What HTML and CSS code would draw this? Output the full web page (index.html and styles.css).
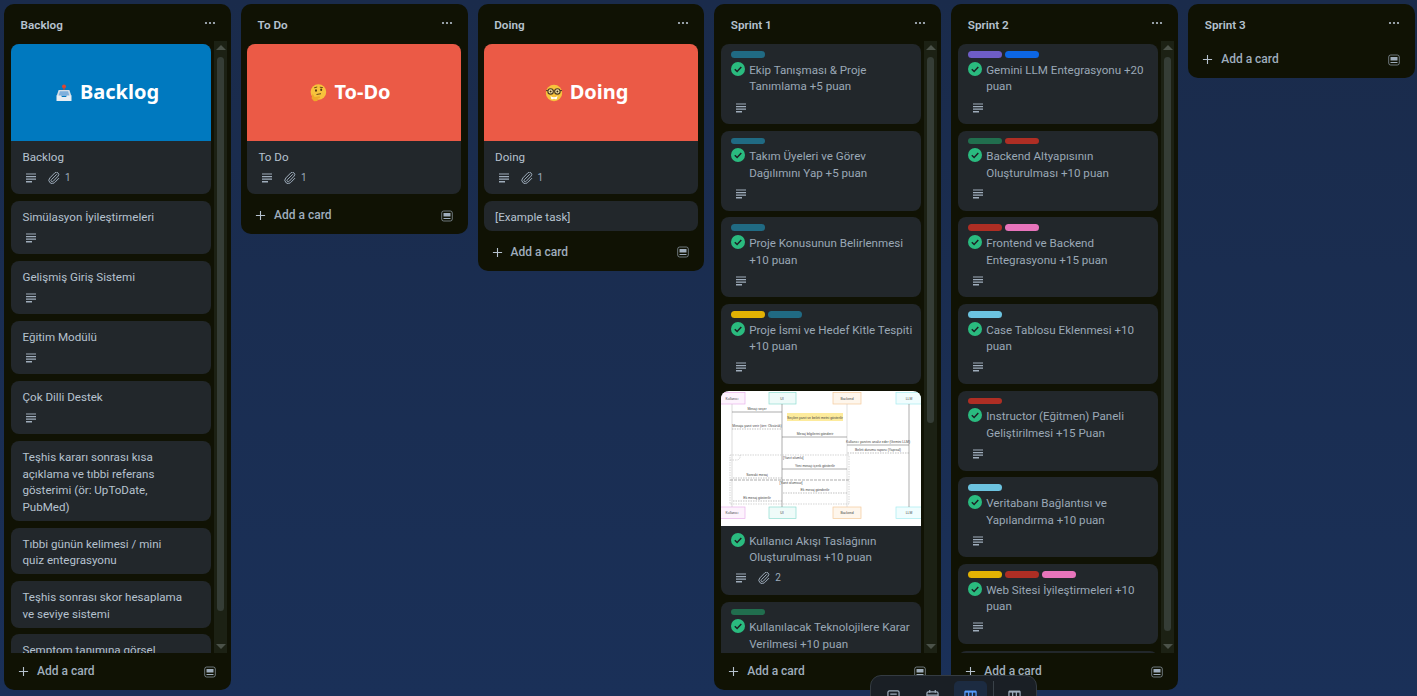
FILE: index.html
```html
<!DOCTYPE html>
<html lang="tr">
<head>
    <meta charset="UTF-8">
    <meta name="viewport" content="width=device-width, initial-scale=1.0">
    <title>Board</title>
    <link rel="stylesheet" href="styles.css">
</head>
<body>

    <svg class="sprites" aria-hidden="true">
        <symbol id="i-desc" viewBox="0 0 12 12">
            <path d="M1 2h10M1 4.6h10M1 7.2h10" stroke="currentColor" stroke-width="1.2" fill="none"/>
            <path d="M1 9.800h6" stroke="currentColor" stroke-width="1.4" fill="none"/>
        </symbol>
        <symbol id="i-clip" viewBox="0 0 12 12">
            <path d="M8.900 2.200 3.400 7.700a1.200 1.200 0 0 0 1.700 1.700l5-5.300a2.300 2.300 0 0 0-3.300-3.200L1.900 5.900a3.300 3.300 0 0 0 4.700 4.700l4.400-4.500" stroke="currentColor" stroke-width="1" fill="none"/>
        </symbol>
        <symbol id="i-check" viewBox="0 0 14 14">
            <circle cx="7" cy="7" r="7" fill="#2abb7f"/>
            <path d="M3.800 7.200l2.300 2.300L10.300 4.900" stroke="#1d2125" stroke-width="1.500" fill="none"/>
        </symbol>
        <symbol id="i-dots" viewBox="0 0 12 4">
            <circle cx="2" cy="2" r="1.100" fill="currentColor"/>
            <circle cx="6" cy="2" r="1.100" fill="currentColor"/>
            <circle cx="10" cy="2" r="1.100" fill="currentColor"/>
        </symbol>
        <symbol id="i-plus" viewBox="0 0 12 12">
            <path d="M6 1v10M1 6h10" stroke="currentColor" stroke-width="1.200" fill="none"/>
        </symbol>
        <symbol id="i-template" viewBox="0 0 12 12">
            <rect x=".7" y="1" width="10.600" height="10" rx="2" stroke="currentColor" stroke-width="1" stroke-opacity=".65" fill="none"/>
            <rect x="2.500" y="3" width="7" height="3.500" fill="currentColor"/>
            <path d="M2.500 8.500h7" stroke="currentColor" stroke-width="1" fill="none"/>
        </symbol>
        <symbol id="e-inbox" viewBox="0 0 18 18">
            <circle cx="9" cy="2.600" r="2" fill="#e0452f"/>
            <rect x="8.400" y="3" width="1.200" height="4" fill="#c9453a"/>
            <path d="M3.600 6h10.800l2 6H1.600z" fill="#d3dde6"/>
            <path d="M5 7.200h8l1.500 4.800h-11z" fill="#7fb0dc"/>
            <path d="M1.500 11.500h4.500l1 1.500h4l1-1.500h4.500V17h-15z" fill="#e8eef3"/>
        </symbol>
        <symbol id="e-think" viewBox="0 0 18 18">
            <circle cx="9.400" cy="8" r="7.800" fill="#f7c33c"/>
            <ellipse cx="7" cy="6.500" rx="1" ry="1.300" fill="#5b3a14"/>
            <ellipse cx="12.200" cy="5.800" rx="1" ry="1.300" fill="#5b3a14"/>
            <path d="M5.200 3.800l3-.8M10.800 3.200l3 .4M7.500 10.500l4.500-.8" stroke="#5b3a14" stroke-width=".9" fill="none"/>
            <path d="M3.600 9.500l2 3.500 5-.8.600 1.500-2.500 1-.2 2.300-3.500.3-2.500-3z" fill="#eea92a"/>
        </symbol>
        <symbol id="e-nerd" viewBox="0 0 18 18">
            <circle cx="9" cy="9" r="8.200" fill="#f7c33c"/>
            <circle cx="5.600" cy="7.400" r="2.700" fill="#fbe7a5" stroke="#4a3a20" stroke-width="1.100"/>
            <circle cx="12.400" cy="7.400" r="2.700" fill="#fbe7a5" stroke="#4a3a20" stroke-width="1.100"/>
            <circle cx="5.600" cy="7.600" r="1" fill="#3a2a14"/>
            <circle cx="12.400" cy="7.600" r="1" fill="#3a2a14"/>
            <path d="M1 6.600h2M8.200 6.800h1.600M15 6.600h2" stroke="#4a3a20" stroke-width="1" fill="none"/>
            <path d="M5.500 12c2 1.600 5 1.600 7 0l-.8 3.200H9.800L9 14.400l-.8.800H6.300z" fill="#fff"/>
        </symbol>
        <symbol id="t-inbox" viewBox="0 0 14 14">
            <rect x="1" y="1" width="12" height="11.500" rx="1.500" stroke="currentColor" stroke-width="1.300" fill="none"/>
            <path d="M3.500 4.500h7M3.500 8h7" stroke="currentColor" stroke-width="1.300" fill="none"/>
        </symbol>
        <symbol id="t-cal" viewBox="0 0 14 14">
            <rect x="1" y="2" width="12" height="10.500" rx="1.500" stroke="currentColor" stroke-width="1.300" fill="none"/>
            <path d="M4 0v3M10 0v3M1 5.500h12" stroke="currentColor" stroke-width="1.300" fill="none"/>
        </symbol>
        <symbol id="t-board" viewBox="0 0 14 14">
            <path d="M1 2h12v10.500H1zM5 2v10.500M9 2v10.500" stroke="currentColor" stroke-width="1.300" fill="none"/>
            <path d="M1 1.500h12" stroke="currentColor" stroke-width="1.800" fill="none"/>
        </symbol>
    </svg>

    <div class="board">

        <section class="list">
            <header class="list-head"><h2>Backlog</h2><svg class="dots"><use href="#i-dots"/></svg></header>
            <div class="list-body">
                <div class="cards">
                    <article class="card">
                        <div class="cover cover-blue"><svg class="emoji"><use href="#e-inbox"/></svg><span>Backlog</span></div>
                        <p class="title">Backlog</p>
                        <div class="badges"><svg class="ic"><use href="#i-desc"/></svg><svg class="ic clip"><use href="#i-clip"/></svg><span>1</span></div>
                    </article>
                    <article class="card"><p class="title">Simülasyon İyileştirmeleri</p><div class="badges"><svg class="ic"><use href="#i-desc"/></svg></div></article>
                    <article class="card"><p class="title">Gelişmiş Giriş Sistemi</p><div class="badges"><svg class="ic"><use href="#i-desc"/></svg></div></article>
                    <article class="card"><p class="title">Eğitim Modülü</p><div class="badges"><svg class="ic"><use href="#i-desc"/></svg></div></article>
                    <article class="card"><p class="title">Çok Dilli Destek</p><div class="badges"><svg class="ic"><use href="#i-desc"/></svg></div></article>
                    <article class="card card-plain"><p class="title">Teşhis kararı sonrası kısa açıklama ve tıbbi referans gösterimi (ör: UpToDate, PubMed)</p></article>
                    <article class="card card-plain"><p class="title">Tıbbi günün kelimesi / mini quiz entegrasyonu</p></article>
                    <article class="card card-plain"><p class="title">Teşhis sonrası skor hesaplama ve seviye sistemi</p></article>
                    <article class="card card-plain"><p class="title">Semptom tanımına görsel</p></article>
                </div>
                <div class="scrollbar">
                    <i class="arrow-up"></i>
                    <div class="track"><div class="thumb thumb-backlog"></div></div>
                    <i class="arrow-down"></i>
                </div>
            </div>
            <footer class="list-foot"><svg class="plus"><use href="#i-plus"/></svg><span>Add a card</span><svg class="tpl"><use href="#i-template"/></svg></footer>
        </section>

        <section class="list">
            <header class="list-head"><h2>To Do</h2><svg class="dots"><use href="#i-dots"/></svg></header>
            <div class="list-body">
                <div class="cards cards-wide">
                    <article class="card">
                        <div class="cover cover-red"><svg class="emoji"><use href="#e-think"/></svg><span>To-Do</span></div>
                        <p class="title">To Do</p>
                        <div class="badges"><svg class="ic"><use href="#i-desc"/></svg><svg class="ic clip"><use href="#i-clip"/></svg><span>1</span></div>
                    </article>
                </div>
            </div>
            <footer class="list-foot"><svg class="plus"><use href="#i-plus"/></svg><span>Add a card</span><svg class="tpl"><use href="#i-template"/></svg></footer>
        </section>

        <section class="list">
            <header class="list-head"><h2>Doing</h2><svg class="dots"><use href="#i-dots"/></svg></header>
            <div class="list-body">
                <div class="cards cards-wide">
                    <article class="card">
                        <div class="cover cover-red"><svg class="emoji"><use href="#e-nerd"/></svg><span>Doing</span></div>
                        <p class="title">Doing</p>
                        <div class="badges"><svg class="ic"><use href="#i-desc"/></svg><svg class="ic clip"><use href="#i-clip"/></svg><span>1</span></div>
                    </article>
                    <article class="card card-plain"><p class="title">[Example task]</p></article>
                </div>
            </div>
            <footer class="list-foot"><svg class="plus"><use href="#i-plus"/></svg><span>Add a card</span><svg class="tpl"><use href="#i-template"/></svg></footer>
        </section>

        <section class="list">
            <header class="list-head"><h2>Sprint 1</h2><svg class="dots"><use href="#i-dots"/></svg></header>
            <div class="list-body">
                <div class="cards">
                    <article class="card done">
                        <div class="labels"><b class="teal"></b></div>
                        <p class="title"><svg class="check"><use href="#i-check"/></svg>Ekip Tanışması &amp; Proje Tanımlama +5 puan</p>
                        <div class="badges"><svg class="ic"><use href="#i-desc"/></svg></div>
                    </article>
                    <article class="card done">
                        <div class="labels"><b class="teal"></b></div>
                        <p class="title"><svg class="check"><use href="#i-check"/></svg>Takım Üyeleri ve Görev Dağılımını Yap +5 puan</p>
                        <div class="badges"><svg class="ic"><use href="#i-desc"/></svg></div>
                    </article>
                    <article class="card done">
                        <div class="labels"><b class="teal"></b></div>
                        <p class="title"><svg class="check"><use href="#i-check"/></svg>Proje Konusunun Belirlenmesi +10 puan</p>
                        <div class="badges"><svg class="ic"><use href="#i-desc"/></svg></div>
                    </article>
                    <article class="card done">
                        <div class="labels"><b class="yellow"></b><b class="teal"></b></div>
                        <p class="title"><svg class="check"><use href="#i-check"/></svg>Proje İsmi ve Hedef Kitle Tespiti +10 puan</p>
                        <div class="badges"><svg class="ic"><use href="#i-desc"/></svg></div>
                    </article>
                    <article class="card done card-img">
                        <svg class="diagram" viewBox="0 0 200 135">
                            <rect width="200" height="135" fill="#fff"/>
                            <g fill="none" stroke-width=".7">
                                <rect x="-2" y="1.500" width="26" height="11.500" stroke="#e7b3ea" fill="#fdf3fd"/>
                                <rect x="48" y="1.500" width="27" height="11.500" stroke="#8fdcd0" fill="#effbf9"/>
                                <rect x="112" y="1.500" width="28" height="11.500" stroke="#f3c99b" fill="#fef6ec"/>
                                <rect x="175" y="1.500" width="27" height="11.500" stroke="#a5ecf0" fill="#f0fdfe"/>
                                <rect x="-2" y="116" width="26" height="11.500" stroke="#e7b3ea" fill="#fdf3fd"/>
                                <rect x="48" y="116" width="27" height="11.500" stroke="#8fdcd0" fill="#effbf9"/>
                                <rect x="112" y="116" width="28" height="11.500" stroke="#f3c99b" fill="#fef6ec"/>
                                <rect x="175" y="116" width="27" height="11.500" stroke="#a5ecf0" fill="#f0fdfe"/>
                            </g>
                            <rect x="66" y="22" width="56" height="8" fill="#fdeb9c"/>
                            <g stroke-width=".6" fill="none">
                                <path d="M11 13v103" stroke="#c4c4c4"/>
                                <path d="M61 13v103" stroke="#777"/>
                                <path d="M126 13v103" stroke="#ccc"/>
                                <path d="M188 13v103" stroke="#777"/>
                                <path d="M11 21h50M61 46h65M126 54h62M126 78H61" stroke="#777"/>
                                <path d="M11 38h50M188 62h-62M61 87H11M126 102H61M61 110H11" stroke="#999" stroke-dasharray="1.500 1"/>
                                <path d="M9 89h119" stroke="#777" stroke-dasharray="3 1"/>
                                <path d="M9 64h119v49H9zM9 69h8l2-2v-3" stroke="#bbb" stroke-dasharray="1.500 1"/>
                            </g>
                            <g class="diagram-text">
                                <text x="11" y="8.500" text-anchor="middle">Kullanıcı</text>
                                <text x="61" y="8.500" text-anchor="middle">UI</text>
                                <text x="126" y="8.500" text-anchor="middle">Backend</text>
                                <text x="188" y="8.500" text-anchor="middle">LLM</text>
                                <text x="11" y="123" text-anchor="middle">Kullanıcı</text>
                                <text x="61" y="123" text-anchor="middle">UI</text>
                                <text x="126" y="123" text-anchor="middle">Backend</text>
                                <text x="188" y="123" text-anchor="middle">LLM</text>
                                <text x="36" y="19" text-anchor="middle">Mesajı seçer</text>
                                <text x="94" y="27.500" text-anchor="middle">Seçilen yanıt ve belirti metni gösterilir</text>
                                <text x="36" y="36" text-anchor="middle">Mesaja yanıt verir (örn: Öksürük)</text>
                                <text x="94" y="44" text-anchor="middle">Mesaj bilgilerini gönderir</text>
                                <text x="157" y="52" text-anchor="middle">Kullanıcı yanıtını analiz eder (Gemini LLM)</text>
                                <text x="157" y="60" text-anchor="middle">Belirti durumu raporu (Yapısal)</text>
                                <text x="62" y="68">[Yanıt olumlu]</text>
                                <text x="94" y="76" text-anchor="middle">Yeni mesajı içerik gösterilir</text>
                                <text x="36" y="85" text-anchor="middle">Sonraki mesaj</text>
                                <text x="70" y="93" text-anchor="middle">[Yanıt olumsuz]</text>
                                <text x="94" y="100" text-anchor="middle">Ek mesaj gönderilir</text>
                                <text x="36" y="108" text-anchor="middle">Ek mesaj gösterilir</text>
                            </g>
                        </svg>
                        <div class="labels labels-none"></div>
                        <p class="title"><svg class="check"><use href="#i-check"/></svg>Kullanıcı Akışı Taslağının Oluşturulması +10 puan</p>
                        <div class="badges"><svg class="ic"><use href="#i-desc"/></svg><svg class="ic clip"><use href="#i-clip"/></svg><span>2</span></div>
                    </article>
                    <article class="card done">
                        <div class="labels"><b class="green"></b></div>
                        <p class="title"><svg class="check"><use href="#i-check"/></svg>Kullanılacak Teknolojilere Karar Verilmesi +10 puan</p>
                    </article>
                </div>
                <div class="scrollbar">
                    <i class="arrow-up"></i>
                    <div class="track"><div class="thumb thumb-s1"></div></div>
                    <i class="arrow-down"></i>
                </div>
            </div>
            <footer class="list-foot"><svg class="plus"><use href="#i-plus"/></svg><span>Add a card</span><svg class="tpl"><use href="#i-template"/></svg></footer>
        </section>

        <section class="list">
            <header class="list-head"><h2>Sprint 2</h2><svg class="dots"><use href="#i-dots"/></svg></header>
            <div class="list-body">
                <div class="cards">
                    <article class="card done">
                        <div class="labels"><b class="purple"></b><b class="blue"></b></div>
                        <p class="title"><svg class="check"><use href="#i-check"/></svg>Gemini LLM Entegrasyonu +20 puan</p>
                        <div class="badges"><svg class="ic"><use href="#i-desc"/></svg></div>
                    </article>
                    <article class="card done">
                        <div class="labels"><b class="green"></b><b class="red"></b></div>
                        <p class="title"><svg class="check"><use href="#i-check"/></svg>Backend Altyapısının Oluşturulması +10 puan</p>
                        <div class="badges"><svg class="ic"><use href="#i-desc"/></svg></div>
                    </article>
                    <article class="card done">
                        <div class="labels"><b class="red"></b><b class="pink"></b></div>
                        <p class="title"><svg class="check"><use href="#i-check"/></svg>Frontend ve Backend Entegrasyonu +15 puan</p>
                        <div class="badges"><svg class="ic"><use href="#i-desc"/></svg></div>
                    </article>
                    <article class="card done">
                        <div class="labels"><b class="sky"></b></div>
                        <p class="title"><svg class="check"><use href="#i-check"/></svg>Case Tablosu Eklenmesi +10 puan</p>
                        <div class="badges"><svg class="ic"><use href="#i-desc"/></svg></div>
                    </article>
                    <article class="card done">
                        <div class="labels"><b class="red"></b></div>
                        <p class="title"><svg class="check"><use href="#i-check"/></svg>Instructor (Eğitmen) Paneli Geliştirilmesi +15 Puan</p>
                        <div class="badges"><svg class="ic"><use href="#i-desc"/></svg></div>
                    </article>
                    <article class="card done">
                        <div class="labels"><b class="sky"></b></div>
                        <p class="title"><svg class="check"><use href="#i-check"/></svg>Veritabanı Bağlantısı ve Yapılandırma +10 puan</p>
                        <div class="badges"><svg class="ic"><use href="#i-desc"/></svg></div>
                    </article>
                    <article class="card done">
                        <div class="labels"><b class="yellow"></b><b class="red"></b><b class="pink"></b></div>
                        <p class="title"><svg class="check"><use href="#i-check"/></svg>Web Sitesi İyileştirmeleri +10 puan</p>
                        <div class="badges"><svg class="ic"><use href="#i-desc"/></svg></div>
                    </article>
                    <article class="card done card-clipped"></article>
                </div>
                <div class="scrollbar">
                    <i class="arrow-up"></i>
                    <div class="track"><div class="thumb thumb-s2"></div></div>
                    <i class="arrow-down"></i>
                </div>
            </div>
            <footer class="list-foot"><svg class="plus"><use href="#i-plus"/></svg><span>Add a card</span><svg class="tpl"><use href="#i-template"/></svg></footer>
        </section>

        <section class="list">
            <header class="list-head"><h2>Sprint 3</h2><svg class="dots"><use href="#i-dots"/></svg></header>
            <footer class="list-foot"><svg class="plus"><use href="#i-plus"/></svg><span>Add a card</span><svg class="tpl"><use href="#i-template"/></svg></footer>
        </section>

    </div>

    <nav class="switcher">
        <a class="tab"><svg><use href="#t-inbox"/></svg></a>
        <a class="tab"><svg><use href="#t-cal"/></svg></a>
        <a class="tab active"><svg><use href="#t-board"/></svg></a>
        <a class="tab tab-last"><svg><use href="#t-board"/></svg></a>
    </nav>

</body>
</html>
```
FILE: styles.css
```css
* {
    box-sizing: border-box;
}
html, body {
    height: 100%;
}
body {
    margin: 0;
    overflow: hidden;
    font-family: Roboto, "Noto Sans", Arial, sans-serif;
    font-size: 12px;
    line-height: 16.67px;
    color: #b6c2cf;
    background: linear-gradient(180deg, #1a2b4b 0%, #1a3058 100%);
}
.sprites {
    display: none;
}

.board {
    display: flex;
    align-items: flex-start;
    gap: 10px;
    height: 696px;
    padding: 4px 3px 6px 4px;
}
.list {
    display: flex;
    flex-direction: column;
    flex: 0 0 226.6px;
    max-height: 686px;
    background-color: #101204;
    border-radius: 10px;
}
.list-head {
    display: flex;
    align-items: center;
    justify-content: space-between;
    flex: none;
    height: 37px;
    padding: 5px 15px 0 16.6px;
}
.list-head h2 {
    margin: 0;
    font-size: 11.7px;
    font-weight: 600;
    color: #b6c2cf;
}
.dots {
    width: 12px;
    height: 4px;
    margin-top: -4px;
    color: #b6c2cf;
}

.list-body {
    display: flex;
    flex: 1;
    min-height: 0;
    padding-left: 7px;
    padding-right: 4px;
}
.cards {
    display: flex;
    flex-direction: column;
    gap: 6.67px;
    flex: 0 0 200px;
    padding-top: 3px;
    overflow: hidden;
}
.cards-wide {
    flex: 1;
    margin-left: -1px;
    margin-right: 2.6px;
    padding-bottom: 3px;
}
.card {
    flex: none;
    padding-bottom: 8.16px;
    overflow: hidden;
    background-color: #22272b;
    border-radius: 8px;
}
.card-plain {
    padding-bottom: 5.33px;
}
.card-plain .title {
    padding-right: 26px;
}
.title {
    margin: 0;
    padding: 8px 11.5px 0;
    font-size: 11.6px;
    color: #b6c2cf;
}
.badges {
    display: flex;
    align-items: center;
    height: 16px;
    margin-top: 4.5px;
    padding-left: 14px;
    font-size: 10px;
    color: #9fadbc;
}
.ic {
    width: 12px;
    height: 12px;
}
.clip {
    margin-left: 11px;
    margin-right: 5px;
}

.cover {
    display: flex;
    align-items: center;
    justify-content: center;
    gap: 7px;
    height: 97px;
    padding-right: 8px;
    font-family: "Noto Sans", sans-serif;
    font-size: 20px;
    font-weight: 700;
    color: #fff;
}
.cover-blue {
    background-color: #0079bf;
}
.cover-red {
    background-color: #eb5a46;
}
.emoji {
    width: 18px;
    height: 18px;
}

.done {
    padding-bottom: 8.5px;
}
.done .title {
    position: relative;
    padding: 4px 8px 0 28px;
    color: #9aa8b6;
}
.check {
    position: absolute;
    left: 10px;
    top: 4px;
    width: 14px;
    height: 14px;
}
.labels {
    display: flex;
    gap: 3px;
    padding: 7px 9.6px 0;
}
.labels b {
    display: block;
    width: 34px;
    height: 6.67px;
    border-radius: 4px;
}
.labels-none {
    padding-top: 0;
}
.card-img .title {
    padding-top: 7px;
}
.card-img .check {
    top: 7px;
}
.card-clipped {
    height: 40px;
}
.teal { background-color: #206a83; }
.yellow { background-color: #e2b203; }
.green { background-color: #216e4e; }
.purple { background-color: #6e5dc6; }
.blue { background-color: #0c66e4; }
.red { background-color: #ae2e24; }
.pink { background-color: #e774bb; }
.sky { background-color: #6cc3e0; }

.diagram {
    display: block;
    width: 200px;
    height: 135px;
}
.diagram-text text {
    font-family: "Liberation Sans", sans-serif;
    font-size: 3.4px;
    fill: #444;
}

.scrollbar {
    display: flex;
    flex-direction: column;
    align-items: center;
    flex: 0 0 13px;
    margin-left: 3px;
    background-color: #1c2114;
}
.track {
    flex: 1;
    width: 7px;
    margin: 3px 0;
}
.thumb {
    width: 100%;
    background-color: #353d36;
    border-radius: 4px;
}
.thumb-backlog { height: 554px; }
.thumb-s1 { height: 366px; }
.thumb-s2 { height: 574px; }
.arrow-up, .arrow-down {
    flex: none;
    width: 0;
    height: 0;
    margin: 4px 0;
    border-left: 5px solid transparent;
    border-right: 5px solid transparent;
}
.arrow-up {
    border-bottom: 5px solid #4b5249;
}
.arrow-down {
    border-top: 5px solid #4b5249;
}

.list-foot {
    display: flex;
    align-items: center;
    flex: none;
    height: 37px;
    padding: 0 15px 0 14px;
    color: #9fadbc;
}
.list-foot span {
    flex: 1;
    margin-left: 8px;
    font-weight: 500;
}
.plus {
    width: 11px;
    height: 11px;
    color: #b6c2cf;
}
.tpl {
    width: 12px;
    height: 12px;
}

.switcher {
    position: fixed;
    left: 870px;
    bottom: -24px;
    display: flex;
    width: 167px;
    height: 45px;
    padding: 5px 6px;
    background-color: #1a1f25;
    border: 1px solid #343b42;
    border-radius: 11px;
}
.tab {
    display: flex;
    justify-content: center;
    width: 33px;
    height: 34px;
    margin-right: 5.5px;
    padding-top: 9px;
    color: #9fadbc;
    border-radius: 5px;
}
.tab svg {
    width: 13px;
    height: 13px;
}
.tab.active {
    color: #579dff;
    background-color: #1c2b41;
}
.tab-last {
    margin-right: 0;
    border-left: 1px solid #3a4249;
    border-radius: 0;
    height: 18px;
    padding-left: 14px;
    justify-content: flex-start;
}
```
